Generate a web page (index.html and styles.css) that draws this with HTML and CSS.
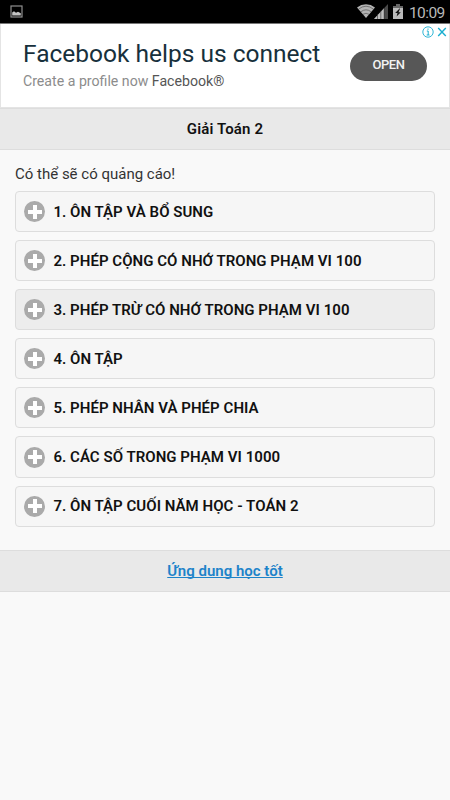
FILE: index.html
```html
<!DOCTYPE html>
<html lang="vi">
<head>
    <meta charset="UTF-8">
    <meta name="viewport" content="width=device-width, initial-scale=1.0">
    <title>Giải Toán 2</title>
    <link rel="stylesheet" href="styles.css">
</head>
<body>
    <div class="status-bar">
        <svg class="picture-icon" width="13" height="13" viewBox="0 0 13 13">
            <rect x="1" y="1" width="11" height="11" fill="none" stroke="#8f8f8f" stroke-width="1.2"/>
            <path d="M2.2 10.4V7.6L4 6.2l2 1.6 2-1 2.8 1.4v2.2z" fill="#c4c4c4"/>
        </svg>
        <div class="status-right">
            <svg width="18" height="14" viewBox="0 0 18 14">
                <path d="M9 14L0 3.4Q4 .3 9 .3t9 3.1z" fill="#b4b4b4"/>
                <path d="M1.5 5.2Q9-.8 16.5 5.2M3.8 7.8Q9 3.8 14.2 7.8M6 10.3Q9 8.2 12 10.3" fill="none" stroke="#444" stroke-width=".6"/>
            </svg>
            <svg class="signal" width="14" height="15" viewBox="0 0 14 15">
                <path d="M0 15L14 0v15z" fill="#4a4a4a"/>
                <path d="M0 15L10 4.3V15z" fill="#bdbdbd"/>
                <path d="M3.5 10v5M6.8 7v8M10.2 4v11" stroke="#333" stroke-width=".6"/>
            </svg>
            <svg class="battery" width="10" height="15" viewBox="0 0 10 15">
                <path d="M3 0h4v2h3v13H0V2h3z" fill="#666"/>
                <path d="M0 4h10v11H0z" fill="#bababa"/>
                <path d="M6.5 4.6L2.2 9h2.3l-.9 3.6L7.8 8.2H5.5l1.6-3.6z" fill="#111"/>
            </svg>
            <span class="clock">10:09</span>
        </div>
    </div>

    <div class="ad">
        <div class="ad-text">
            <div class="ad-title">Facebook helps us connect</div>
            <div class="ad-desc">Create a profile now <span>Facebook®</span></div>
        </div>
        <button class="ad-button">OPEN</button>
        <svg class="ad-choices" width="25" height="12" viewBox="0 0 25 12" fill="none" stroke="#19aed0">
            <circle cx="6" cy="6" r="5.2" stroke-width=".9"/>
            <path d="M4.8 5h1.4v4M4.7 9h2.8M6 2.5v1.3" stroke-width="1"/>
            <path d="M16.2 2l7.6 8M23.8 2l-7.6 8" stroke-width="1.4"/>
        </svg>
    </div>

    <h1 class="bar header">Giải Toán 2</h1>

    <div class="content">
        <p>Có thể sẽ có quảng cáo!</p>
        <div class="item"><i class="plus"></i><span>1. ÔN TẬP VÀ BỔ SUNG</span></div>
        <div class="item"><i class="plus"></i><span>2. PHÉP CỘNG CÓ NHỚ TRONG PHẠM VI 100</span></div>
        <div class="item active"><i class="plus"></i><span>3. PHÉP TRỪ CÓ NHỚ TRONG PHẠM VI 100</span></div>
        <div class="item"><i class="plus"></i><span>4. ÔN TẬP</span></div>
        <div class="item"><i class="plus"></i><span>5. PHÉP NHÂN VÀ PHÉP CHIA</span></div>
        <div class="item"><i class="plus"></i><span>6. CÁC SỐ TRONG PHẠM VI 1000</span></div>
        <div class="item"><i class="plus"></i><span>7. ÔN TẬP CUỐI NĂM HỌC - TOÁN 2</span></div>
    </div>

    <div class="bar footer"><a href="#">Ứng dung học tốt</a></div>
</body>
</html>
```

FILE: styles.css
```css
* {
    box-sizing: border-box;
}
body {
    margin: 0;
    background: #f9f9f9;
    color: #111;
    font-family: Roboto, sans-serif;
    font-size: 15px;
}
.status-bar {
    display: flex;
    justify-content: space-between;
    height: 24px;
    padding: 0 5px 0 10px;
    background: #000;
    border-bottom: 1px solid #777;
}
.picture-icon {
    margin-top: 5px;
}
.status-right {
    display: flex;
    align-items: flex-start;
    padding-top: 4px;
}
.signal {
    margin-left: -1px;
}
.battery {
    margin-left: 5px;
}
.clock {
    width: 36px;
    margin-left: 6px;
    color: #b9b9b9;
    font-size: 15.5px;
    letter-spacing: -0.6px;
    line-height: 18px;
    white-space: nowrap;
}
.ad {
    position: relative;
    display: flex;
    justify-content: space-between;
    height: 84px;
    padding: 0 22px 0 22px;
    background: #fff;
    border: 1px solid #e4e4e4;
    border-top: 0;
}
.ad-title {
    margin-top: 15px;
    color: #17303c;
    font-size: 24.5px;
    line-height: 30px;
    white-space: nowrap;
}
.ad-desc {
    margin-top: 3px;
    color: #8c8c8c;
    font-size: 14.15px;
    line-height: 19px;
}
.ad-desc span {
    color: #555;
}
.ad-button {
    width: 77px;
    height: 30px;
    margin-top: 27px;
    padding: 0 0 4px;
    border: 0;
    border-radius: 15px;
    background: #575757;
    color: #f2f2f2;
    font: 500 13px Roboto, sans-serif;
    letter-spacing: -0.5px;
}
.ad-choices {
    position: absolute;
    top: 2px;
    right: 2px;
}
.bar {
    display: flex;
    align-items: center;
    justify-content: center;
    margin: 0;
    height: 42px;
    background: #e9e9e9;
    border: 1px solid #ddd;
    border-width: 1px 0;
    font-size: 15px;
    font-weight: 600;
}
.header {
    letter-spacing: 0.15px;
}
.content {
    height: 400px;
    padding: 15px;
}
.content p {
    margin: 0 0 7px;
    color: #333;
    line-height: 19px;
}
.item {
    display: flex;
    align-items: center;
    height: 41.1px;
    margin-bottom: 8px;
    padding-left: 8.4px;
    background: #f6f6f6;
    border: 1px solid #ddd;
    border-radius: 4px;
    font-weight: 600;
    letter-spacing: 0.04px;
}
.active {
    background: #ededed;
}
.plus {
    width: 21px;
    height: 21px;
    margin-right: 8px;
    border-radius: 50%;
    background:
        linear-gradient(#fff, #fff) center / 14px 4px no-repeat,
        linear-gradient(#fff, #fff) center / 4px 14px no-repeat,
        #aaa;
}
.footer a {
    color: #1d83c9;
    text-decoration-skip-ink: none;
}
```
